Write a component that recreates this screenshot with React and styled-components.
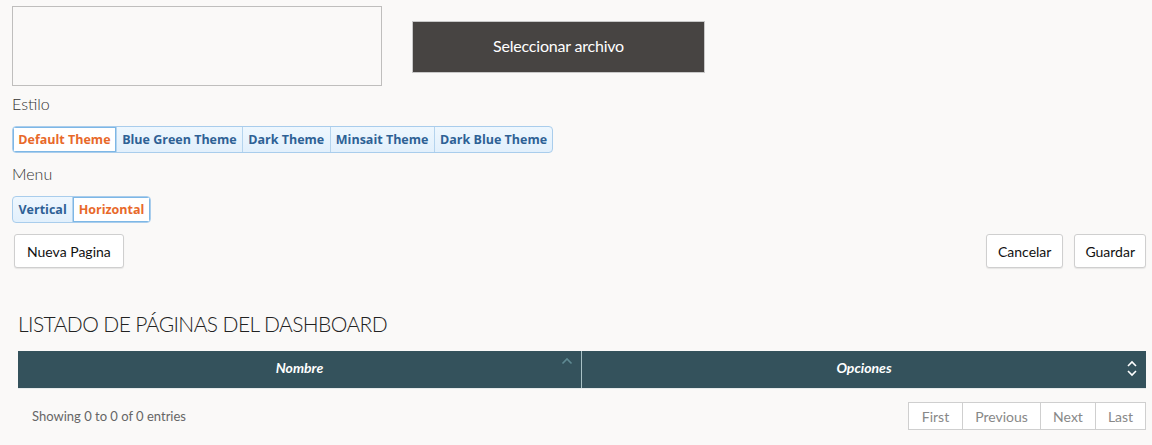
import React from "react";
import styled, { createGlobalStyle } from "styled-components";

const Global = createGlobalStyle`
  html, body { margin: 0; padding: 0; background: #faf9f8; }
  body { font-family: Lato, "Open Sans", sans-serif; color: #333; }
  * { box-sizing: border-box; }
`;

const Page = styled.div`
  width: 1152px;
  height: 445px;
  padding: 6px 6px 0 12px;
  display: flex;
  flex-direction: column;
  overflow: hidden;
`;

const TopRow = styled.div`
  display: flex;
  align-items: flex-start;
  gap: 30px;
`;

const DropBox = styled.div`
  width: 370px;
  height: 80px;
  border: 1px solid #bfbebd;
  background: #faf9f8;
`;

const FileButton = styled.button`
  margin-top: 15px;
  width: 293px;
  height: 52px;
  padding: 0 0 4px;
  background: #474442;
  border: 1px solid #c8c8c8;
  color: #fff;
  font-family: Lato, sans-serif;
  font-size: 16px;
  letter-spacing: -0.2px;
`;

const Label = styled.div`
  font-family: Lato, sans-serif;
  font-weight: 300;
  font-size: 16px;
  color: #333;
  line-height: 20px;
  margin-top: ${p => p.$top}px;
`;

const Group = styled.div`
  display: inline-flex;
  align-self: flex-start;
  margin-top: ${p => p.$top}px;
  border: 1px solid #a9cdec;
  border-radius: 4px;
  overflow: hidden;
  background: linear-gradient(#eef7fe, #e2f0fc);
`;

const Seg = styled.div`
  height: 25px;
  display: flex;
  align-items: center;
  padding: 0 ${p => p.$pad}px;
  border-left: 1px solid #b5d4ee;
  &:first-child { border-left: none; }
  background: ${p => (p.$active ? "#fff" : "transparent")};
  box-shadow: ${p => (p.$active ? "inset 0 0 0 1px #7db7e6" : "none")};
  color: ${p => (p.$active ? "#e8692a" : "#2e6195")};
  font-family: "Open Sans", sans-serif;
  font-weight: 700;
  font-size: 12.5px;
  white-space: nowrap;
`;

const ActionRow = styled.div`
  display: flex;
  justify-content: space-between;
  margin-top: 11px;
  padding-left: 2px;
`;

const Right = styled.div`
  display: flex;
  gap: 11px;
`;

const Btn = styled.button`
  height: 34px;
  padding: 0 ${p => p.$pad}px;
  background: #fff;
  border: 1px solid #cfcfcf;
  border-radius: 3px;
  box-shadow: 0 1px 1px rgba(0, 0, 0, 0.08);
  color: #111;
  font-family: Lato, sans-serif;
  font-size: 14px;
`;

const Title = styled.h2`
  margin: 43px 0 0 6px;
  font-family: Lato, sans-serif;
  font-weight: 300;
  font-size: 21px;
  letter-spacing: -0.6px;
  color: #222;
  line-height: 26px;
`;

const Table = styled.div`
  margin: 14px 0 0 6px;
  width: 1128px;
  height: 38px;
  display: grid;
  grid-template-columns: 563px 1fr;
  background: #34525c;
  border-bottom: 1px solid #e6eaeb;
`;

const HeadCell = styled.div`
  position: relative;
  display: flex;
  align-items: center;
  justify-content: center;
  padding-bottom: 4px;
  color: #fff;
  font-family: Lato, sans-serif;
  font-style: italic;
  font-weight: 700;
  font-size: 14px;
  & + & { border-left: 1px solid #a9c2c6; }
`;

const SortIcon = styled.svg`
  position: absolute;
  right: ${p => p.$right}px;
  top: ${p => p.$top}px;
`;

const Footer = styled.div`
  display: flex;
  justify-content: space-between;
  align-items: center;
  margin: 13px 0 0 20px;
`;

const Info = styled.div`
  font-family: Lato, sans-serif;
  font-size: 13px;
  color: #666;
  margin-bottom: 1px;
`;

const Pager = styled.div`
  display: flex;
  border: 1px solid #cfcfcf;
  background: #fff;
`;

const PageBtn = styled.div`
  height: 26px;
  width: ${p => p.$w}px;
  display: flex;
  align-items: center;
  justify-content: center;
  border-left: 1px solid #cfcfcf;
  &:first-child { border-left: none; }
  font-family: Lato, sans-serif;
  font-size: 14px;
  color: #888;
`;

export default function App() {
  return (
    <>
      <Global />
      <Page>
        <TopRow>
          <DropBox />
          <FileButton>Seleccionar archivo</FileButton>
        </TopRow>
        <Label $top={8}>Estilo</Label>
        <Group $top={12}>
          <Seg $active $pad={5.3}>Default Theme</Seg>
          <Seg $pad={5.3}>Blue Green Theme</Seg>
          <Seg $pad={5.3}>Dark Theme</Seg>
          <Seg $pad={5.3}>Minsait Theme</Seg>
          <Seg $pad={5.3}>Dark Blue Theme</Seg>
        </Group>
        <Label $top={11}>Menu</Label>
        <Group $top={12}>
          <Seg $pad={5.5}>Vertical</Seg>
          <Seg $active $pad={5.5}>Horizontal</Seg>
        </Group>
        <ActionRow>
          <Btn $pad={12}>Nueva Pagina</Btn>
          <Right>
            <Btn $pad={11}>Cancelar</Btn>
            <Btn $pad={10}>Guardar</Btn>
          </Right>
        </ActionRow>
        <Title>LISTADO DE PÁGINAS DEL DASHBOARD</Title>
        <Table>
          <HeadCell>
            Nombre
            <SortIcon $right={8} $top={6} width="12" height="8" viewBox="0 0 12 8">
              <path d="M1.5 6.5 L6 2 L10.5 6.5" fill="none" stroke="#5f8a93" strokeWidth="1.6" />
            </SortIcon>
          </HeadCell>
          <HeadCell>
            Opciones
            <SortIcon $right={8} $top={8} width="12" height="20" viewBox="0 0 12 20">
              <path d="M2 7 L6 3 L10 7" fill="none" stroke="#fff" strokeWidth="1.6" />
              <path d="M2 12 L6 16 L10 12" fill="none" stroke="#fff" strokeWidth="1.6" />
            </SortIcon>
          </HeadCell>
        </Table>
        <Footer>
          <Info>Showing 0 to 0 of 0 entries</Info>
          <Pager>
            <PageBtn $w={53}>First</PageBtn>
            <PageBtn $w={78}>Previous</PageBtn>
            <PageBtn $w={55}>Next</PageBtn>
            <PageBtn $w={50}>Last</PageBtn>
          </Pager>
        </Footer>
      </Page>
    </>
  );
}
